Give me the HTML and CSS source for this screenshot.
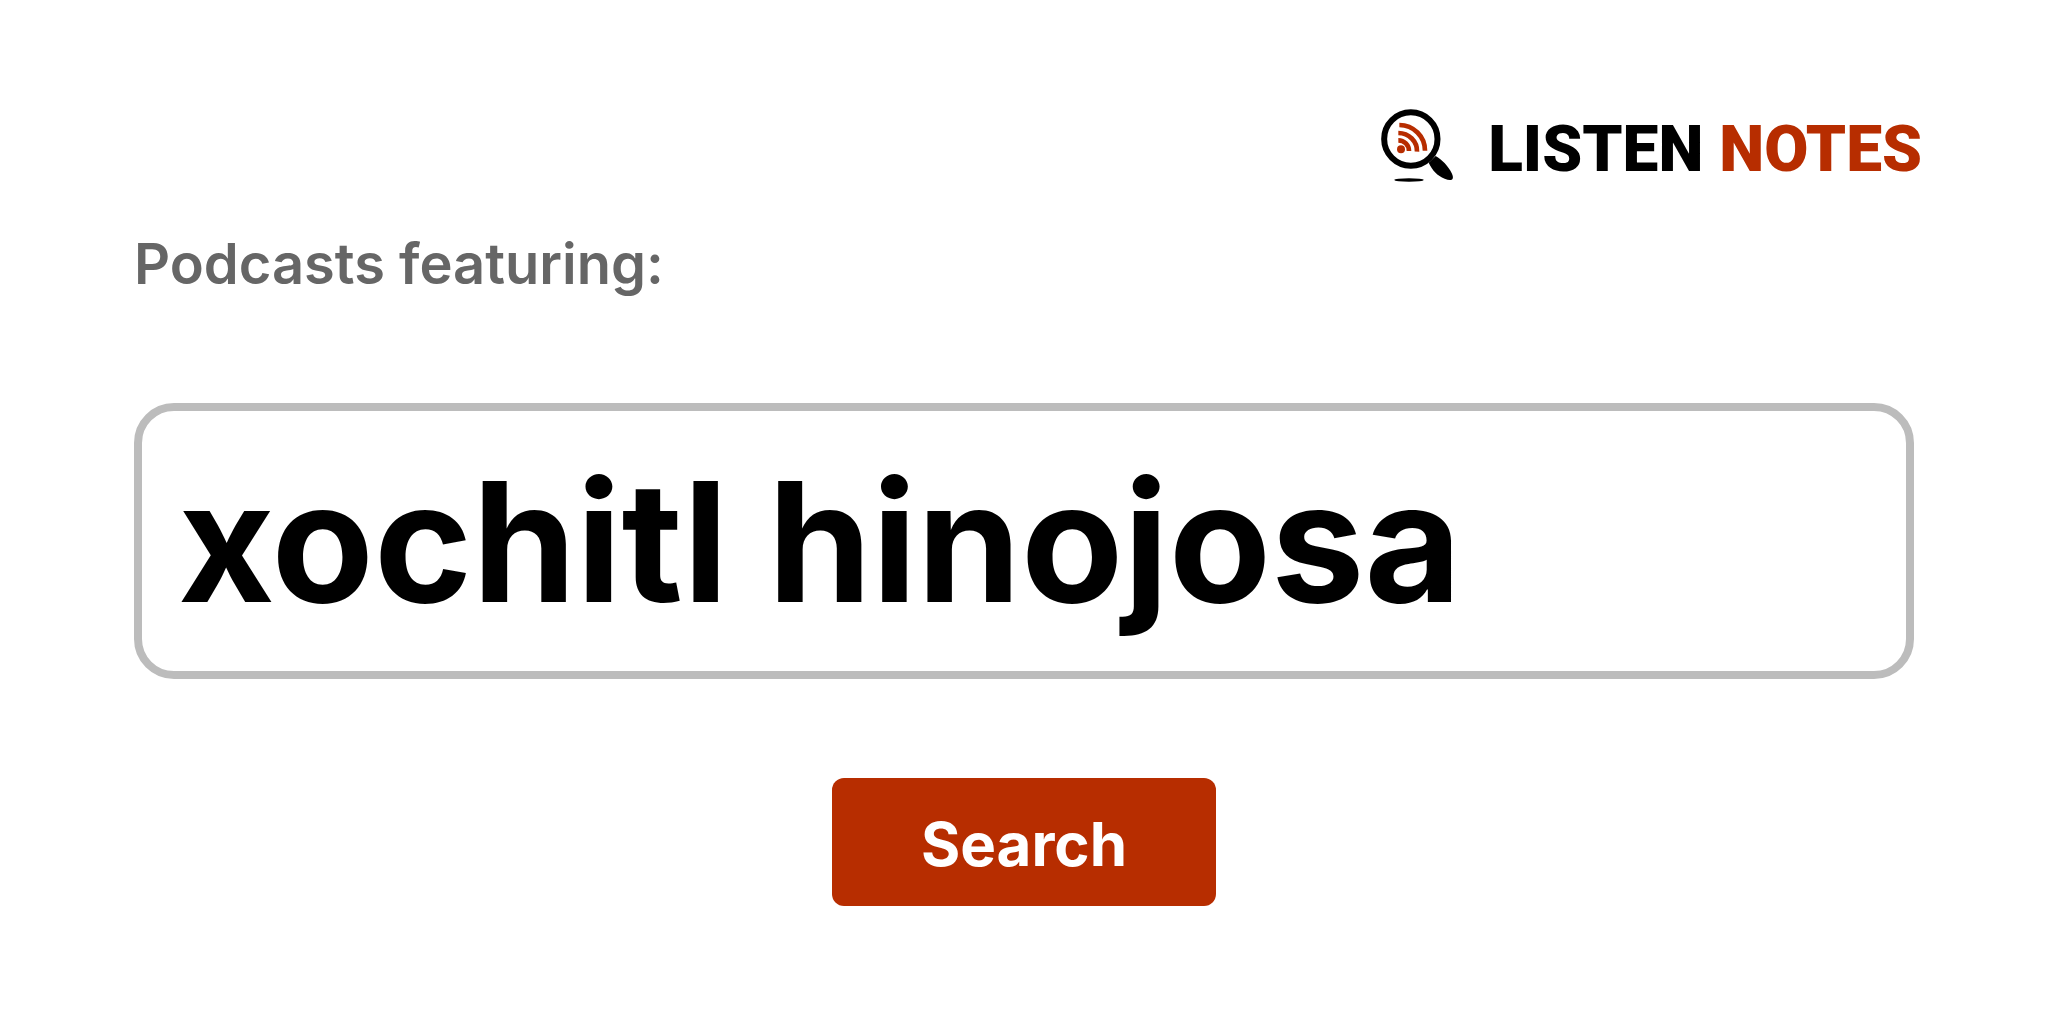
FILE: index.html
```
<!DOCTYPE html>
<html lang="en">
<head>
<meta charset="utf-8">
<title>Listen Notes</title>
<link rel="stylesheet" href="styles.css">
</head>
<body>
<main class="page">
  <header class="brand">
    <svg class="brand-icon" viewBox="38 39 228 228" aria-hidden="true">
      <path d="M184 203 L205 183 C224 194 243 213 254 236 Q260 250 253 254 Q246 257 232 251 C210 242 195 226 184 203 Z" fill="#000"/>
      <circle cx="130.500" cy="132" r="80" fill="#fff" stroke="#000" stroke-width="18"/>
      <ellipse cx="125" cy="255" rx="44" ry="5" fill="#000"/>
      <g fill="none" stroke="#b72d00" stroke-width="14">
        <path d="M96 90 A77 77 0 0 1 173 167"/>
        <path d="M93 114 A56 54 0 0 1 149 170"/>
        <path d="M93 136 A32 32 0 0 1 125 168"/>
      </g>
      <circle cx="101" cy="163" r="12" fill="#b72d00"/>
    </svg>
    <span class="brand-name">LISTEN <span class="brand-accent">NOTES</span></span>
  </header>
  <form class="search">
    <label class="search-label" for="query">Podcasts featuring:</label>
    <input class="search-input" id="query" type="text" value="xochitl hinojosa">
    <button class="search-button" type="button">Search</button>
  </form>
</main>
</body>
</html>
```
FILE: styles.css
```
* { box-sizing: border-box; }
body { margin: 0; background: #fff; color: #000; font-family: Inter, "Liberation Sans", sans-serif; }
.page { padding: 108px 134px; }
.brand { display: flex; justify-content: flex-end; align-items: center; gap: 32px; margin-right: -8px; }
.brand-icon { width: 76px; height: 76px; }
.brand-name { padding-top: 8px; font-family: Roboto, sans-serif; font-weight: 900; font-size: 64px; line-height: 68px; white-space: nowrap; }
.brand-accent { color: #b72d00; }
.search { display: flex; flex-direction: column; }
.search-label { margin-top: 44px; font-size: 56px; line-height: 72px; font-weight: 600; color: #666; }
.search-input { width: 100%; height: 276px; margin-top: 103px; padding: 0 36px; border: 8px solid #bcbcbc; border-radius: 40px; background: #fff; color: #000; font: inherit; font-size: 167px; font-weight: 700; outline: none; }
.search-button { align-self: center; width: 384px; height: 128px; margin-top: 99px; padding: 4px 0 0; border: 0; border-radius: 12px; background: #b72d00; color: #fff; font: inherit; font-size: 60px; font-weight: 700; }
```
